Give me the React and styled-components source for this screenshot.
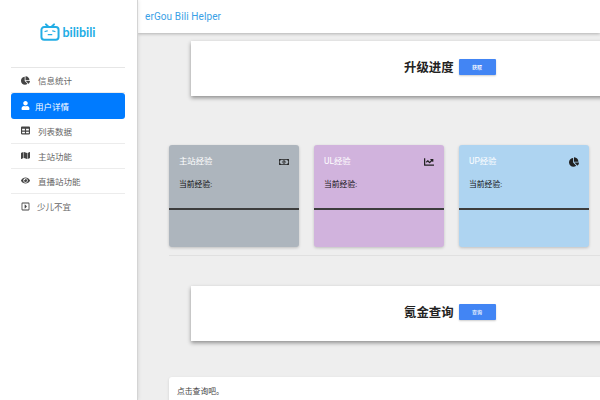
import React from "react";
import styled, { createGlobalStyle } from "styled-components";
import { FaChartPie, FaUser, FaTable, FaMap, FaEye, FaRegCaretSquareRight, FaRegMoneyBillAlt, FaChartLine } from "react-icons/fa";

const Global = createGlobalStyle`
  html, body { margin: 0; padding: 0; width: 600px; height: 400px; overflow: hidden; }
  body { font-family: Roboto, "Noto Sans CJK SC", sans-serif; background: #eeeeee; }
`;

const Page = styled.div`
  display: flex;
  width: 600px;
  height: 400px;
  overflow: hidden;
`;

const Sidebar = styled.aside`
  flex: 0 0 138px;
  box-sizing: border-box;
  height: 400px;
  background: #fff;
  border-right: 1px solid #d4d4d4;
  box-shadow: 0 0 4px rgba(0,0,0,.12);
  padding: 0 12px 0 11px;
  z-index: 2;
`;

const Logo = styled.div`
  height: 68px;
  box-sizing: border-box;
  border-bottom: 1px solid #e6e6e6;
  display: flex;
  align-items: flex-start;
  justify-content: center;
  gap: 2px;
  padding-top: 23px;
  color: #23ade5;
`;

const LogoWord = styled.span`
  font: 700 12.5px/18px Lato, "Liberation Sans", sans-serif;
  color: #23ade5;
  margin-top: 1px;
`;

const Nav = styled.nav`
  display: flex;
  flex-direction: column;
`;

const Item = styled.div`
  height: ${p => (p.$active ? "25.5px" : "25px")};
  box-sizing: border-box;
  display: flex;
  align-items: center;
  padding-left: 10px;
  gap: ${p => p.$gap}px;
  font-size: 8.5px;
  color: ${p => (p.$active ? "#fff" : "#666")};
  background: ${p => (p.$active ? "#007bff" : "transparent")};
  border-radius: ${p => (p.$active ? "3px" : "0")};
  border-bottom: ${p => (p.$line ? "1px solid #ececec" : "none")};
  svg { width: 9px; height: 9px; flex: none; color: ${p => (p.$active ? "#fff" : "#444")}; }
`;

const Main = styled.main`
  flex: 1;
  min-width: 0;
  display: flex;
  flex-direction: column;
`;

const Header = styled.header`
  flex: 0 0 33px;
  box-sizing: border-box;
  background: #fff;
  box-shadow: 0 1px 3px rgba(0,0,0,.25);
  padding-left: 7px;
  display: flex;
  align-items: center;
  font-size: 10px;
  letter-spacing: .1px;
  color: #3a9fe6;
  z-index: 1;
`;

const Content = styled.div`
  width: 520px;
  padding-left: 31px;
  display: flex;
  flex-direction: column;
`;

const Banner = styled.section`
  margin-left: 22px;
  width: 500px;
  height: 55px;
  margin-top: ${p => p.$mt}px;
  background: #fff;
  box-shadow: 0 2px 4px rgba(0,0,0,.4);
  display: flex;
  align-items: center;
  gap: 5px;
  padding: 0 0 4px 213px;
  box-sizing: border-box;
`;

const BannerTitle = styled.h2`
  margin: 0;
  font-size: 12.4px;
  font-weight: 700;
  color: #222;
  white-space: nowrap;
  font-family: "Noto Sans CJK SC", sans-serif;
`;

const Btn = styled.button`
  width: 37px;
  height: 16px;
  border: 0;
  padding: 0;
  background: #4285f4;
  color: #fff;
  font: 500 5px "Noto Sans CJK SC", sans-serif;
  border-radius: 1px;
  box-shadow: 0 1px 2px rgba(0,0,0,.2);
`;

const Cards = styled.div`
  display: flex;
  gap: 15px;
  margin-top: 49px;
  padding-bottom: 8px;
  border-bottom: 1px solid #e0e0e0;
`;

const Card = styled.div`
  flex: 0 0 130px;
  height: 102px;
  border-radius: 3px;
  background: ${p => p.$bg};
  box-shadow: 0 1px 3px rgba(0,0,0,.2);
`;

const CardTop = styled.div`
  height: 65px;
  box-sizing: border-box;
  padding: 10px 10px 0 10px;
  border-bottom: 2px solid #3d3d3d;
`;

const CardHead = styled.div`
  display: flex;
  justify-content: space-between;
  align-items: center;
  color: #fff;
  font-size: 8.4px;
  line-height: 13px;
  svg { width: 10px; height: 10px; color: #222; }
`;

const CardText = styled.div`
  margin-top: 11px;
  font-size: 7.8px;
  line-height: 12px;
  color: #111;
`;

const Result = styled.div`
  margin-top: 36px;
  width: 520px;
  height: 60px;
  box-sizing: border-box;
  background: #fff;
  border-radius: 3px;
  box-shadow: 0 1px 3px rgba(0,0,0,.12);
  padding: 9px 8px;
  font-size: 7.8px;
  line-height: 12px;
  color: #444;
`;

function BiliIcon() {
  return (
    <svg width="20" height="18" viewBox="0 0 22 20" fill="none" stroke="currentColor" strokeWidth="2.2" strokeLinecap="round">
      <path d="M6.5 1.5 L9.5 4.5 M15.5 1.5 L12.5 4.5" />
      <rect x="1.5" y="4.5" width="19" height="14" rx="3" />
      <path d="M5.5 9.5 L8 8.7 M14 8.7 L16.5 9.5 M9 13 H13" strokeWidth="1.3" />
    </svg>
  );
}

const nav = [
  { icon: <FaChartPie />, label: "信息统计", line: true, gap: 8 },
  { icon: <FaUser />, label: "用户详情", active: true, gap: 5 },
  { icon: <FaTable />, label: "列表数据", line: true, gap: 8 },
  { icon: <FaMap />, label: "主站功能", line: true, gap: 8 },
  { icon: <FaEye />, label: "直播站功能", line: true, gap: 8 },
  { icon: <FaRegCaretSquareRight />, label: "少儿不宜", gap: 7 },
];

const cards = [
  { title: "主站经验", bg: "#adb5bd", icon: <FaRegMoneyBillAlt /> },
  { title: "UL经验", bg: "#d1b3dd", icon: <FaChartLine /> },
  { title: "UP经验", bg: "#aed4f1", icon: <FaChartPie /> },
];

export default function App() {
  return (
    <Page>
      <Global />
      <Sidebar>
        <Logo>
          <BiliIcon />
          <LogoWord>bilibili</LogoWord>
        </Logo>
        <Nav>
          {nav.map(n => (
            <Item key={n.label} $active={n.active} $line={n.line} $gap={n.gap}>
              {n.icon}
              <span>{n.label}</span>
            </Item>
          ))}
        </Nav>
      </Sidebar>
      <Main>
        <Header>erGou Bili Helper</Header>
        <Content>
          <Banner $mt={8}>
            <BannerTitle>升级进度</BannerTitle>
            <Btn>获取</Btn>
          </Banner>
          <Cards>
            {cards.map(c => (
              <Card key={c.title} $bg={c.bg}>
                <CardTop>
                  <CardHead>
                    <span>{c.title}</span>
                    {c.icon}
                  </CardHead>
                  <CardText>当前经验:</CardText>
                </CardTop>
              </Card>
            ))}
          </Cards>
          <Banner $mt={30}>
            <BannerTitle>氪金查询</BannerTitle>
            <Btn>查询</Btn>
          </Banner>
          <Result>点击查询吧。</Result>
        </Content>
      </Main>
    </Page>
  );
}
